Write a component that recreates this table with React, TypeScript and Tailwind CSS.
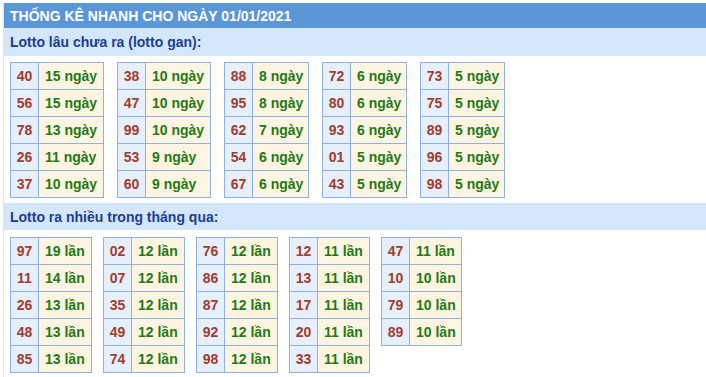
import React from "react";

type Item = { num: string; val: string };
type Group = { w: string; rows: Item[] };

const ganTables: Group[] = [
  {
    w: "w-[94px]",
    rows: [
      { num: "40", val: "15 ngày" },
      { num: "56", val: "15 ngày" },
      { num: "78", val: "13 ngày" },
      { num: "26", val: "11 ngày" },
      { num: "37", val: "10 ngày" },
    ],
  },
  {
    w: "w-[94px]",
    rows: [
      { num: "38", val: "10 ngày" },
      { num: "47", val: "10 ngày" },
      { num: "99", val: "10 ngày" },
      { num: "53", val: "9 ngày" },
      { num: "60", val: "9 ngày" },
    ],
  },
  {
    w: "w-[85px]",
    rows: [
      { num: "88", val: "8 ngày" },
      { num: "95", val: "8 ngày" },
      { num: "62", val: "7 ngày" },
      { num: "54", val: "6 ngày" },
      { num: "67", val: "6 ngày" },
    ],
  },
  {
    w: "w-[85px]",
    rows: [
      { num: "72", val: "6 ngày" },
      { num: "80", val: "6 ngày" },
      { num: "93", val: "6 ngày" },
      { num: "01", val: "5 ngày" },
      { num: "43", val: "5 ngày" },
    ],
  },
  {
    w: "w-[85px]",
    rows: [
      { num: "73", val: "5 ngày" },
      { num: "75", val: "5 ngày" },
      { num: "89", val: "5 ngày" },
      { num: "96", val: "5 ngày" },
      { num: "98", val: "5 ngày" },
    ],
  },
];

const nhieuTables: Group[] = [
  {
    w: "w-[82px]",
    rows: [
      { num: "97", val: "19 lần" },
      { num: "11", val: "14 lần" },
      { num: "26", val: "13 lần" },
      { num: "48", val: "13 lần" },
      { num: "85", val: "13 lần" },
    ],
  },
  {
    w: "w-[82px]",
    rows: [
      { num: "02", val: "12 lần" },
      { num: "07", val: "12 lần" },
      { num: "35", val: "12 lần" },
      { num: "49", val: "12 lần" },
      { num: "74", val: "12 lần" },
    ],
  },
  {
    w: "w-[82px]",
    rows: [
      { num: "76", val: "12 lần" },
      { num: "86", val: "12 lần" },
      { num: "87", val: "12 lần" },
      { num: "92", val: "12 lần" },
      { num: "98", val: "12 lần" },
    ],
  },
  {
    w: "w-[81px]",
    rows: [
      { num: "12", val: "11 lần" },
      { num: "13", val: "11 lần" },
      { num: "17", val: "11 lần" },
      { num: "20", val: "11 lần" },
      { num: "33", val: "11 lần" },
    ],
  },
  {
    w: "w-[81px]",
    rows: [
      { num: "47", val: "11 lần" },
      { num: "10", val: "10 lần" },
      { num: "79", val: "10 lần" },
      { num: "89", val: "10 lần" },
    ],
  },
];

const StatTable = ({ group }: { group: Group }) => (
  <table className={`${group.w} shrink-0 table-fixed border-collapse`}>
    <colgroup>
      <col className="w-[28px]" />
      <col />
    </colgroup>
    <tbody>
      {group.rows.map((r, i) => (
        <tr key={i}>
          <td className="h-[27px] overflow-hidden border border-[#8fb0e4] bg-[#e6effc] p-0 text-center text-[#a23c2c]">
            {r.num}
          </td>
          <td className="h-[27px] overflow-hidden border border-[#8fb0e4] bg-[#fef4e2] py-0 pl-[6px] pr-0 text-left whitespace-nowrap text-[#1f7a16]">
            {r.val}
          </td>
        </tr>
      ))}
    </tbody>
  </table>
);

const SectionTitle = ({ children, h }: { children: React.ReactNode; h: string }) => (
  <div className={`${h} flex items-center bg-[#d4e7fa] pl-[6px] text-[#1b3e92]`}>{children}</div>
);

export default function App() {
  return (
    <div
      className="h-[377px] w-[706px] overflow-hidden bg-white pl-[3px] pt-[3px] text-[14px] font-bold leading-4"
      style={{ fontFamily: '"Liberation Sans", Arial, sans-serif' }}
    >
      <div className="h-full border-l border-[#dde3ea]">
        {/* Header */}
        <div className="flex h-[25px] items-center bg-[#5b96d6] pl-[6px] text-white">
          THỐNG KÊ NHANH CHO NGÀY 01/01/2021
        </div>

        {/* Lotto gan */}
        <SectionTitle h="h-[28px]">Lotto lâu chưa ra (lotto gan):</SectionTitle>
        <div className="flex items-start gap-[13px] pl-[6px] pt-[6px]">
          {ganTables.map((t, i) => (
            <StatTable key={i} group={t} />
          ))}
        </div>

        {/* Lotto ra nhieu */}
        <div className="mt-[5px]">
          <SectionTitle h="h-[27px]">Lotto ra nhiều trong tháng qua:</SectionTitle>
        </div>
        <div className="flex items-start gap-[11px] pl-[6px] pt-[7px]">
          {nhieuTables.map((t, i) => (
            <StatTable key={i} group={t} />
          ))}
        </div>
      </div>
    </div>
  );
}
